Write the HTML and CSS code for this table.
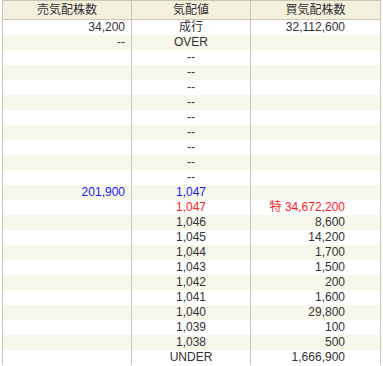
FILE: index.html
```html
<!DOCTYPE html>
<html lang="ja">
<head>
<meta charset="utf-8">
<link rel="stylesheet" href="styles.css">
</head>
<body>
<table class="board">
  <thead>
    <tr><th>売気配株数</th><th>気配値</th><th>買気配株数</th></tr>
  </thead>
  <tbody>
    <tr><td class="sell">34,200</td><td class="price">成行</td><td class="buy">32,112,600</td></tr>
    <tr><td class="sell">--</td><td class="price">OVER</td><td class="buy"></td></tr>
    <tr><td class="sell"></td><td class="price">--</td><td class="buy"></td></tr>
    <tr><td class="sell"></td><td class="price">--</td><td class="buy"></td></tr>
    <tr><td class="sell"></td><td class="price">--</td><td class="buy"></td></tr>
    <tr><td class="sell"></td><td class="price">--</td><td class="buy"></td></tr>
    <tr><td class="sell"></td><td class="price">--</td><td class="buy"></td></tr>
    <tr><td class="sell"></td><td class="price">--</td><td class="buy"></td></tr>
    <tr><td class="sell"></td><td class="price">--</td><td class="buy"></td></tr>
    <tr><td class="sell"></td><td class="price">--</td><td class="buy"></td></tr>
    <tr><td class="sell"></td><td class="price">--</td><td class="buy"></td></tr>
    <tr><td class="sell blue">201,900</td><td class="price blue">1,047</td><td class="buy"></td></tr>
    <tr><td class="sell"></td><td class="price red">1,047</td><td class="buy red">特 34,672,200</td></tr>
    <tr><td class="sell"></td><td class="price">1,046</td><td class="buy">8,600</td></tr>
    <tr><td class="sell"></td><td class="price">1,045</td><td class="buy">14,200</td></tr>
    <tr><td class="sell"></td><td class="price">1,044</td><td class="buy">1,700</td></tr>
    <tr><td class="sell"></td><td class="price">1,043</td><td class="buy">1,500</td></tr>
    <tr><td class="sell"></td><td class="price">1,042</td><td class="buy">200</td></tr>
    <tr><td class="sell"></td><td class="price">1,041</td><td class="buy">1,600</td></tr>
    <tr><td class="sell"></td><td class="price">1,040</td><td class="buy">29,800</td></tr>
    <tr><td class="sell"></td><td class="price">1,039</td><td class="buy">100</td></tr>
    <tr><td class="sell"></td><td class="price">1,038</td><td class="buy">500</td></tr>
    <tr><td class="sell"></td><td class="price">UNDER</td><td class="buy">1,666,900</td></tr>
  </tbody>
</table>
</body>
</html>
```
FILE: styles.css
```css
html, body {
  margin: 0;
  padding: 0;
  background: #ffffff;
}
body {
  padding-left: 2px;
  font-family: "Liberation Sans", "Noto Sans CJK JP", Arial, sans-serif;
  font-size: 12px;
  color: #333333;
}
.board {
  border-collapse: collapse;
  table-layout: fixed;
  width: 379px;
}
.board th,
.board td {
  border-left: 1px solid #c9c6b6;
  border-right: 1px solid #c9c6b6;
  padding: 0;
  white-space: nowrap;
  overflow: hidden;
}
.board th:nth-child(1), .board td:nth-child(1) { width: 128px; }
.board th:nth-child(2), .board td:nth-child(2) { width: 118px; }
.board th:nth-child(3), .board td:nth-child(3) { width: 129px; }
.board th {
  height: 18px;
  background: #f3f1de;
  border-top: 1px solid #c9c6b6;
  border-bottom: 1px solid #c9c6b6;
  font-weight: normal;
  text-align: center;
  line-height: 18px;
}
.board td {
  height: 15px;
  line-height: 15px;
}
.board tbody tr:nth-child(even) td {
  background: #f7f7ec;
}
.sell {
  text-align: right;
  padding-right: 6px !important;
}
.price {
  text-align: center;
}
.buy {
  text-align: right;
  padding-right: 35px !important;
}
.blue { color: #1a1aff; }
.red { color: #ff1a1a; }
```
